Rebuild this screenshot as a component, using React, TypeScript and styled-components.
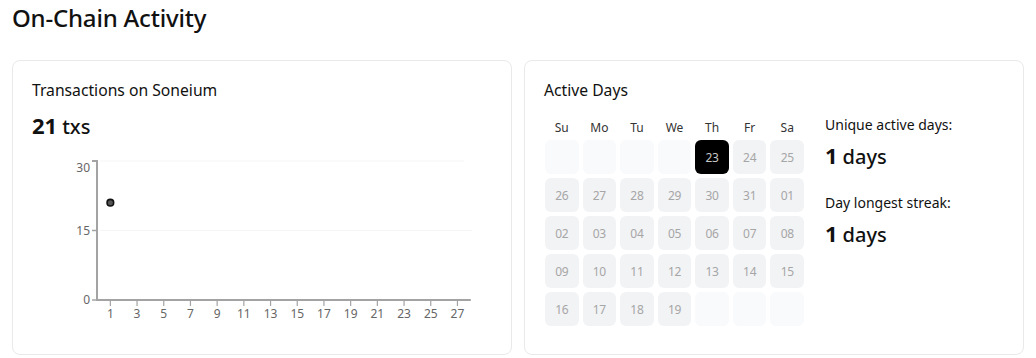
import styled, { createGlobalStyle } from 'styled-components';

const GlobalStyle = createGlobalStyle`
    body {
        margin: 0;
        background: #fff;
        font-family: 'Noto Sans', 'Open Sans', sans-serif;
        color: #111;
    }
`;

const Page = styled.div`
    padding: 2px 12px 0;
`;

const Heading = styled.h1`
    margin: 0 0 26px;
    font-size: 24px;
    line-height: 32px;
    font-weight: 500;
    letter-spacing: -0.2px;
`;

const Cards = styled.div`
    display: grid;
    grid-template-columns: 1fr 1fr;
    gap: 12px;
`;

const Card = styled.section`
    height: 295px;
    box-sizing: border-box;
    border: 1px solid #e9e9e9;
    border-radius: 8px;
    padding: 18px 19px;
    background: #fff;
`;

const CardTitle = styled.div`
    font-size: 15.7px;
    line-height: 22px;
`;

const BigValue = styled.div`
    margin-top: 10px;
    font-size: 20px;
    line-height: 28px;
    font-weight: 500;

    b {
        font-size: 22px;
        font-weight: 700;
        margin-right: 5px;
    }
`;

const ChartSvg = styled.svg`
    display: block;
    margin-top: 10px;
    width: 460px;
    height: 176px;
    font-family: 'Noto Sans', sans-serif;
`;

const ActivityBody = styled.div`
    display: flex;
    align-items: flex-start;
    gap: 21px;
    margin-top: 14px;
`;

const Calendar = styled.div`
    width: 259px;
    margin-top: 5px;
    margin-left: 1px;
`;

const WeekRow = styled.div`
    display: grid;
    grid-template-columns: repeat(7, 1fr);
    column-gap: 4px;
    margin-bottom: 4px;
`;

const WeekDay = styled.span`
    text-align: center;
    font-size: 12px;
    line-height: 16px;
    color: #333;
`;

const DayGrid = styled.div`
    display: grid;
    grid-template-columns: repeat(7, 1fr);
    grid-auto-rows: 34px;
    gap: 4px;
`;

const DayCell = styled.div<{ $state: 'empty' | 'idle' | 'active' }>`
    display: flex;
    align-items: center;
    justify-content: center;
    border-radius: 6px;
    font-size: 12px;
    letter-spacing: -0.3px;
    background: ${p => (p.$state === 'active' ? '#000' : p.$state === 'idle' ? '#f2f3f5' : '#f9fafb')};
    color: ${p => (p.$state === 'active' ? '#c8c8c8' : '#a6a6a6')};
`;

const Stats = styled.div`
    display: flex;
    flex-direction: column;
`;

const StatLabel = styled.div`
    font-size: 14px;
    line-height: 20px;
    color: #111;
`;

const StatValue = styled(BigValue)`
    margin: 6px 0 22px;
`;

const weekDays = ['Su', 'Mo', 'Tu', 'We', 'Th', 'Fr', 'Sa'];

const days: { label: string; state: 'empty' | 'idle' | 'active' }[] = [
    ...Array.from({ length: 4 }, () => ({ label: '', state: 'empty' as const })),
    { label: '23', state: 'active' },
    ...['24', '25', '26', '27', '28', '29', '30', '31', '01', '02', '03', '04', '05', '06', '07', '08', '09', '10', '11', '12', '13', '14', '15', '16', '17', '18', '19'].map(label => ({
        label,
        state: 'idle' as const,
    })),
    ...Array.from({ length: 3 }, () => ({ label: '', state: 'empty' as const })),
];

// chart geometry, origin is the left edge of the card content
const X0 = 65;
const DAY_W = 13.35;
const Y_TOP = 10;
const Y_BOT = 149;
const yOf = (v: number) => Y_BOT - (v / 30) * (Y_BOT - Y_TOP);

const TxChart = () => {
    const xTicks = Array.from({ length: 14 }, (_, i) => 1 + i * 2);
    const axis = '#a3a3a3';

    return (
        <ChartSvg viewBox='0 0 460 176'>
            <line x1={68} x2={432} y1={yOf(30)} y2={yOf(30)} stroke='#f5f5f5' />
            <line x1={68} x2={440} y1={yOf(15)} y2={yOf(15)} stroke='#f5f5f5' />

            <path d={`M60 ${Y_TOP} H${X0} V${Y_BOT} H${X0 + 28 * DAY_W}`} fill='none' stroke={axis} strokeWidth={2} />
            <line x1={60} x2={X0} y1={yOf(15)} y2={yOf(15)} stroke={axis} strokeWidth={1.5} />
            <line x1={60} x2={X0} y1={Y_BOT} y2={Y_BOT} stroke={axis} strokeWidth={1.5} />

            <g fill='#666' fontSize={12} textAnchor='end'>
                <text x={58} y={yOf(30) + 11}>30</text>
                <text x={58} y={yOf(15) + 4}>15</text>
                <text x={58} y={Y_BOT + 4}>0</text>
            </g>

            {xTicks.map(d => (
                <g key={d}>
                    <line x1={X0 + d * DAY_W} x2={X0 + d * DAY_W} y1={Y_BOT} y2={Y_BOT + 6} stroke={axis} strokeWidth={1.2} />
                    <text x={X0 + d * DAY_W} y={Y_BOT + 18} fill='#666' fontSize={12} textAnchor='middle'>
                        {d}
                    </text>
                </g>
            ))}

            <circle cx={X0 + DAY_W} cy={yOf(21)} r={3.3} fill='#555' stroke='#111' strokeWidth={1.6} />
        </ChartSvg>
    );
};

const App = () => {
    return (
        <Page>
            <GlobalStyle />
            <Heading>On-Chain Activity</Heading>
            <Cards>
                <Card>
                    <CardTitle>Transactions on Soneium</CardTitle>
                    <BigValue>
                        <b>21</b>txs
                    </BigValue>
                    <TxChart />
                </Card>

                <Card>
                    <CardTitle>Active Days</CardTitle>
                    <ActivityBody>
                        <Calendar>
                            <WeekRow>
                                {weekDays.map(w => (
                                    <WeekDay key={w}>{w}</WeekDay>
                                ))}
                            </WeekRow>
                            <DayGrid>
                                {days.map((d, i) => (
                                    <DayCell key={i} $state={d.state}>
                                        {d.label}
                                    </DayCell>
                                ))}
                            </DayGrid>
                        </Calendar>
                        <Stats>
                            <StatLabel>Unique active days:</StatLabel>
                            <StatValue>
                                <b>1</b>days
                            </StatValue>
                            <StatLabel>Day longest streak:</StatLabel>
                            <StatValue>
                                <b>1</b>days
                            </StatValue>
                        </Stats>
                    </ActivityBody>
                </Card>
            </Cards>
        </Page>
    );
};

export default App;
